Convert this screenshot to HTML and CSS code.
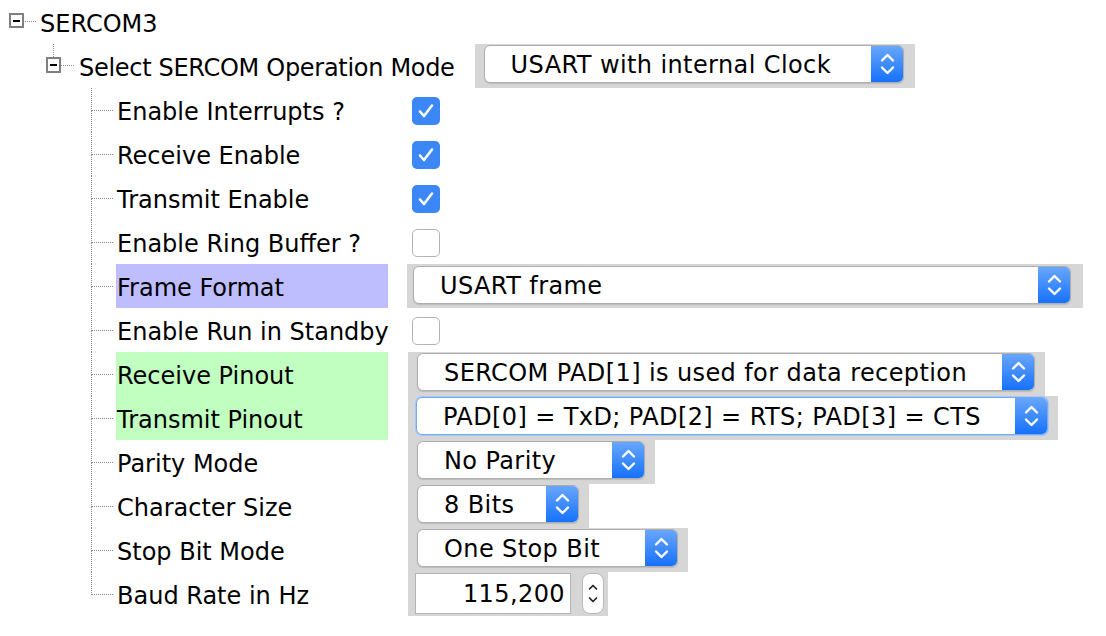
FILE: index.html
```html
<!DOCTYPE html>
<html>
<head>
<meta charset="utf-8">
<link rel="stylesheet" href="styles.css">
</head>
<body>
<div class="tree">
  <div class="row root">
    <span class="expander"></span><span class="dash"></span><span class="text">SERCOM3</span>
  </div>
  <div class="row mode">
    <span class="exp-col"><span class="stub"></span><span class="expander"></span></span>
    <span class="dash"></span><span class="text">Select SERCOM Operation Mode</span>
    <div class="panel">
      <div class="select w-mode"><span class="val">USART with internal Clock</span><span class="btn"><svg width="33" height="38" viewBox="0 0 33 38"><path d="M11 15.5 L16.5 10 L22 15.5 M11 22.5 L16.5 28 L22 22.5" fill="none" stroke="#fff" stroke-width="2.4" stroke-linecap="round" stroke-linejoin="round"/></svg></span></div>
    </div>
  </div>

  <div class="row child">
    <span class="conn"><span class="conn-top"></span><span class="conn-bot"></span></span>
    <span class="label">Enable Interrupts ?</span>
    <div class="ctl"><span class="cb"><svg width="28" height="28" viewBox="0 0 28 28"><path d="M8 14.5 L12 19 L20 8.5" fill="none" stroke="#fff" stroke-width="2.6" stroke-linecap="round" stroke-linejoin="round"/></svg></span></div>
  </div>
  <div class="row child">
    <span class="conn"><span class="conn-top"></span><span class="conn-bot"></span></span>
    <span class="label">Receive Enable</span>
    <div class="ctl"><span class="cb"><svg width="28" height="28" viewBox="0 0 28 28"><path d="M8 14.5 L12 19 L20 8.5" fill="none" stroke="#fff" stroke-width="2.6" stroke-linecap="round" stroke-linejoin="round"/></svg></span></div>
  </div>
  <div class="row child">
    <span class="conn"><span class="conn-top"></span><span class="conn-bot"></span></span>
    <span class="label">Transmit Enable</span>
    <div class="ctl"><span class="cb"><svg width="28" height="28" viewBox="0 0 28 28"><path d="M8 14.5 L12 19 L20 8.5" fill="none" stroke="#fff" stroke-width="2.6" stroke-linecap="round" stroke-linejoin="round"/></svg></span></div>
  </div>
  <div class="row child">
    <span class="conn"><span class="conn-top"></span><span class="conn-bot"></span></span>
    <span class="label">Enable Ring Buffer ?</span>
    <div class="ctl"><span class="cb off"></span></div>
  </div>
  <div class="row child">
    <span class="conn"><span class="conn-top"></span><span class="conn-bot"></span></span>
    <span class="label hl-blue">Frame Format</span>
    <div class="ctl"><div class="panel p-frame">
      <div class="select w-frame"><span class="val">USART frame</span><span class="btn"><svg width="33" height="38" viewBox="0 0 33 38"><path d="M11 15.5 L16.5 10 L22 15.5 M11 22.5 L16.5 28 L22 22.5" fill="none" stroke="#fff" stroke-width="2.4" stroke-linecap="round" stroke-linejoin="round"/></svg></span></div>
    </div></div>
  </div>
  <div class="row child">
    <span class="conn"><span class="conn-top"></span><span class="conn-bot"></span></span>
    <span class="label">Enable Run in Standby</span>
    <div class="ctl"><span class="cb off"></span></div>
  </div>
  <div class="row child">
    <span class="conn"><span class="conn-top"></span><span class="conn-bot"></span></span>
    <span class="label hl-green">Receive Pinout</span>
    <div class="ctl"><div class="panel">
      <div class="select w-rx"><span class="val">SERCOM PAD[1] is used for data reception</span><span class="btn"><svg width="33" height="38" viewBox="0 0 33 38"><path d="M11 15.5 L16.5 10 L22 15.5 M11 22.5 L16.5 28 L22 22.5" fill="none" stroke="#fff" stroke-width="2.4" stroke-linecap="round" stroke-linejoin="round"/></svg></span></div>
    </div></div>
  </div>
  <div class="row child">
    <span class="conn"><span class="conn-top"></span><span class="conn-bot"></span></span>
    <span class="label hl-green">Transmit Pinout</span>
    <div class="ctl"><div class="panel p-tx">
      <div class="select w-tx focus"><span class="val">PAD[0] = TxD; PAD[2] = RTS; PAD[3] = CTS</span><span class="btn"><svg width="33" height="38" viewBox="0 0 33 38"><path d="M11 15.5 L16.5 10 L22 15.5 M11 22.5 L16.5 28 L22 22.5" fill="none" stroke="#fff" stroke-width="2.4" stroke-linecap="round" stroke-linejoin="round"/></svg></span></div>
    </div></div>
  </div>
  <div class="row child">
    <span class="conn"><span class="conn-top"></span><span class="conn-bot"></span></span>
    <span class="label">Parity Mode</span>
    <div class="ctl"><div class="panel">
      <div class="select w-parity"><span class="val">No Parity</span><span class="btn"><svg width="33" height="38" viewBox="0 0 33 38"><path d="M11 15.5 L16.5 10 L22 15.5 M11 22.5 L16.5 28 L22 22.5" fill="none" stroke="#fff" stroke-width="2.4" stroke-linecap="round" stroke-linejoin="round"/></svg></span></div>
    </div></div>
  </div>
  <div class="row child">
    <span class="conn"><span class="conn-top"></span><span class="conn-bot"></span></span>
    <span class="label">Character Size</span>
    <div class="ctl"><div class="panel">
      <div class="select w-char"><span class="val">8 Bits</span><span class="btn"><svg width="33" height="38" viewBox="0 0 33 38"><path d="M11 15.5 L16.5 10 L22 15.5 M11 22.5 L16.5 28 L22 22.5" fill="none" stroke="#fff" stroke-width="2.4" stroke-linecap="round" stroke-linejoin="round"/></svg></span></div>
    </div></div>
  </div>
  <div class="row child">
    <span class="conn"><span class="conn-top"></span><span class="conn-bot"></span></span>
    <span class="label">Stop Bit Mode</span>
    <div class="ctl"><div class="panel">
      <div class="select w-stop"><span class="val">One Stop Bit</span><span class="btn"><svg width="33" height="38" viewBox="0 0 33 38"><path d="M11 15.5 L16.5 10 L22 15.5 M11 22.5 L16.5 28 L22 22.5" fill="none" stroke="#fff" stroke-width="2.4" stroke-linecap="round" stroke-linejoin="round"/></svg></span></div>
    </div></div>
  </div>
  <div class="row child last">
    <span class="conn"><span class="conn-top"></span><span class="conn-bot"></span></span>
    <span class="label">Baud Rate in Hz</span>
    <div class="ctl"><div class="panel p-baud">
      <span class="field">115,200</span>
      <span class="spin"><svg width="20" height="39" viewBox="0 0 20 39"><path d="M6.5 15 L10 11.5 L13.5 15 M6.5 24 L10 27.5 L13.5 24" fill="none" stroke="#222" stroke-width="1.7" stroke-linecap="round" stroke-linejoin="round"/></svg></span>
    </div></div>
  </div>
</div>
</body>
</html>
```
FILE: styles.css
```css
* { box-sizing: border-box; }
body {
  margin: 0;
  background: #fff;
  color: #000;
  font-family: "DejaVu Sans", Verdana, sans-serif;
  font-size: 24px;
}
.row {
  display: flex;
  align-items: flex-start;
  height: 44px;
}
.expander {
  width: 15px;
  height: 15px;
  border: 2px solid #7f7f7f;
  background: #fff;
  display: flex;
  align-items: center;
  justify-content: center;
  flex: none;
}
.expander::after {
  content: "";
  width: 7px;
  height: 2px;
  background: #000;
}
.dash {
  border-top: 1px dotted #8a8a8a;
  flex: none;
}
.text {
  height: 44px;
  line-height: 48px;
  white-space: nowrap;
}
.root { padding-left: 9px; }
.root .expander { margin-top: 13px; }
.root .dash { width: 11px; margin-top: 21px; margin-left: 1px; }
.root .text { margin-left: 4px; }

.mode { padding-left: 46px; }
.exp-col {
  display: flex;
  flex-direction: column;
  width: 15px;
  flex: none;
}
.stub {
  height: 13px;
  margin-left: 7px;
  border-left: 1px dotted #8a8a8a;
}
.mode .expander { height: 16px; }
.mode .dash { width: 13px; margin-top: 21px; }
.mode .text { margin-left: 5px; letter-spacing: -0.3px; }
.mode .panel { margin-left: 20px; padding-right: 11px; }

.child { padding-left: 91px; }
.conn {
  width: 22px;
  height: 44px;
  display: flex;
  flex-direction: column;
  flex: none;
}
.conn-top {
  height: 23px;
  border-left: 1px dotted #8a8a8a;
  border-bottom: 1px dotted #8a8a8a;
}
.conn-bot {
  flex: 1;
  border-left: 1px dotted #8a8a8a;
}
.last .conn-bot { border-left: none; }
.label {
  width: 272px;
  margin-left: 3px;
  padding-left: 1px;
  height: 44px;
  line-height: 48px;
  white-space: nowrap;
  flex: none;
}
.hl-blue { background: #bebeff; }
.hl-green { background: #c0ffc0; }

.ctl {
  margin-left: 20px;
  height: 44px;
  display: flex;
  align-items: flex-start;
}
.panel {
  background: #d6d6d6;
  height: 44px;
  padding: 1px 10px 0 9px;
  display: flex;
  align-items: flex-start;
}
.p-frame { margin-left: -1px; padding: 2px 12px 0 6px; }
.p-tx { padding-left: 8px; }
.p-baud { padding: 1px 4px 0 7px; }

.select {
  height: 38px;
  border: 1px solid #adadad;
  border-radius: 6px;
  background: #fff;
  display: flex;
  overflow: hidden;
  box-shadow: 0 1px 1px rgba(0,0,0,0.12);
}
.select .val {
  flex: 1;
  padding-left: 26px;
  padding-top: 1px;
  line-height: 36px;
  letter-spacing: 0.4px;
  white-space: nowrap;
  overflow: hidden;
}
.select .btn {
  width: 33px;
  margin: -1px -1px -1px 0;
  background: linear-gradient(#6aa8fb, #1470fa);
  border-radius: 0 6px 6px 0;
  display: flex;
  align-items: center;
  justify-content: center;
  flex: none;
}
.select.focus {
  border-color: #7aa9ec;
  box-shadow: 0 0 0 1px #a8c8f4;
}
.w-mode { width: 420px; }
.w-frame { width: 658px; }
.w-rx { width: 618px; }
.w-tx { width: 632px; }
.w-parity { width: 228px; }
.w-char { width: 162px; }
.w-stop { width: 261px; }

.cb {
  width: 28px;
  height: 28px;
  margin-top: 9px;
  margin-left: 4px;
  border-radius: 5px;
  background: #3b87f6;
  display: flex;
  align-items: center;
  justify-content: center;
}
.cb.off {
  background: #fff;
  border: 1px solid #b3b3b3;
}

.field {
  width: 156px;
  height: 41px;
  border: 1px solid #b3b3b3;
  background: #fff;
  text-align: right;
  padding-right: 5px;
  padding-top: 1px;
  line-height: 39px;
  letter-spacing: 0.4px;
}
.spin {
  width: 22px;
  height: 41px;
  margin-left: 11px;
  border: 1px solid #b8b8b8;
  border-radius: 8px;
  background: #fff;
  display: flex;
  align-items: center;
  justify-content: center;
}
```
